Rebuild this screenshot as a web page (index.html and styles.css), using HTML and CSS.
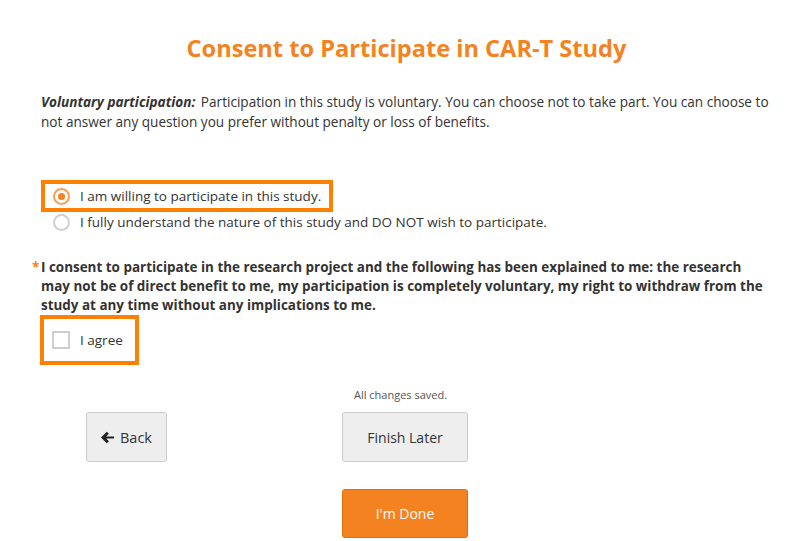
FILE: index.html
```html
<!DOCTYPE html>
<html lang="en">
<head>
<meta charset="utf-8">
<title>Consent to Participate in CAR-T Study</title>
<link rel="stylesheet" href="styles.css">
</head>
<body>
<main class="page">
  <h1 class="title">Consent to Participate in CAR-T Study</h1>
  <p class="intro"><strong class="lead">Voluntary participation:</strong> Participation in this study is voluntary. You can choose not to take part. You can choose to not answer any question you prefer without penalty or loss of benefits.</p>

  <div class="options">
    <label class="option option-highlight">
      <span class="radio radio-on"><span class="radio-dot"></span></span>
      <span class="option-text">I am willing to participate in this study.</span>
    </label>
    <label class="option option-plain">
      <span class="radio"></span>
      <span class="option-text">I fully understand the nature of this study and DO NOT wish to participate.</span>
    </label>
  </div>

  <div class="question">
    <span class="required">*</span>
    <p class="question-text">I consent to participate in the research project and the following has been explained to me: the research may not be of direct benefit to me, my participation is completely voluntary, my right to withdraw from the study at any time without any implications to me.</p>
  </div>

  <label class="agree">
    <span class="checkbox"></span>
    <span class="option-text">I agree</span>
  </label>

  <div class="nav">
    <div class="saved">All changes saved.</div>
    <button class="btn btn-back" type="button">
      <svg class="arrow" viewBox="0 0 12 12" width="13" height="13" aria-hidden="true"><path d="M0 6 L5.3 0.6 L7.3 2.6 L4.8 5 H12 V7 H4.8 L7.3 9.4 L5.3 11.4 Z" fill="#222"/></svg>
      Back
    </button>
    <button class="btn btn-later" type="button">Finish Later</button>
    <button class="btn btn-done" type="button">I'm Done</button>
  </div>
</main>
</body>
</html>
```
FILE: styles.css
```css
* { box-sizing: border-box; }

html, body {
  margin: 0;
  padding: 0;
  background: #fff;
}

body {
  font-family: "Open Sans", "Liberation Sans", sans-serif;
  color: #333;
  font-size: 13.5px;
}

.page {
  width: 810px;
  padding: 0 38px 0 41px;
}

.title {
  margin: 0;
  padding-top: 32px;
  text-align: center;
  font-size: 23.6px;
  line-height: 33px;
  font-weight: 700;
  color: #f58220;
}

.intro {
  margin: 27px 0 0 0;
  font-size: 13.6px;
  line-height: 20px;
}

.lead {
  font-style: italic;
  font-weight: 700;
  padding-right: 2px;
}

.options {
  margin-top: 48px;
  display: flex;
  flex-direction: column;
  align-items: flex-start;
}

.option {
  display: flex;
  align-items: center;
  line-height: 20px;
}

.option-highlight {
  border: 4px solid #ff8000;
  height: 32px;
  padding: 0 8px 0 8px;
}

.option-plain {
  height: 20px;
  padding-left: 12px;
}

.radio {
  width: 17px;
  height: 17px;
  border-radius: 50%;
  border: 2px solid #cfcfcf;
  margin-right: 10px;
  display: flex;
  align-items: center;
  justify-content: center;
  flex: none;
}

.radio-on {
  border-color: #f5a05a;
}

.radio-dot {
  width: 7px;
  height: 7px;
  border-radius: 50%;
  background: #f58220;
}

.option-text {
  font-size: 13.5px;
}

.question {
  position: relative;
  margin-top: 26px;
}

.required {
  position: absolute;
  left: -9px;
  top: 0;
  color: #f58220;
  font-weight: 700;
  font-size: 13.5px;
  line-height: 19px;
}

.question-text {
  margin: 0;
  font-weight: 700;
  font-size: 13.45px;
  line-height: 19px;
}

.agree {
  display: flex;
  width: max-content;
  align-items: center;
  margin-left: -1px;
  height: 50px;
  border: 4px solid #ff8000;
  padding: 0 12px 0 8px;
}

.checkbox {
  width: 18px;
  height: 18px;
  border: 2px solid #cfcfcf;
  margin-right: 10px;
  flex: none;
}

.nav {
  display: grid;
  grid-template-columns: 256px 126px;
  margin-left: 45px;
  margin-top: 23px;
}

.saved {
  grid-column: 2;
  grid-row: 1;
  text-align: center;
  font-size: 11px;
  line-height: 14px;
  color: #555;
  margin-left: -9px;
  margin-bottom: 10px;
}

.btn {
  font-family: "Open Sans", "Liberation Sans", sans-serif;
  font-size: 14px;
  color: #333;
  background: #eee;
  border: 1px solid #ccc;
  border-radius: 3px;
  height: 50px;
  padding: 0;
  display: flex;
  align-items: center;
  justify-content: center;
}

.btn-back {
  grid-column: 1;
  grid-row: 2;
  width: 81px;
  gap: 6px;
  font-size: 14.5px;
}

.arrow {
  display: block;
}

.btn-later {
  grid-column: 2;
  grid-row: 2;
  width: 126px;
}

.btn-done {
  grid-column: 2;
  grid-row: 3;
  width: 126px;
  margin-top: 27px;
  height: 49px;
  background: #f58220;
  border-color: #e0700c;
  color: #fff;
}
```
